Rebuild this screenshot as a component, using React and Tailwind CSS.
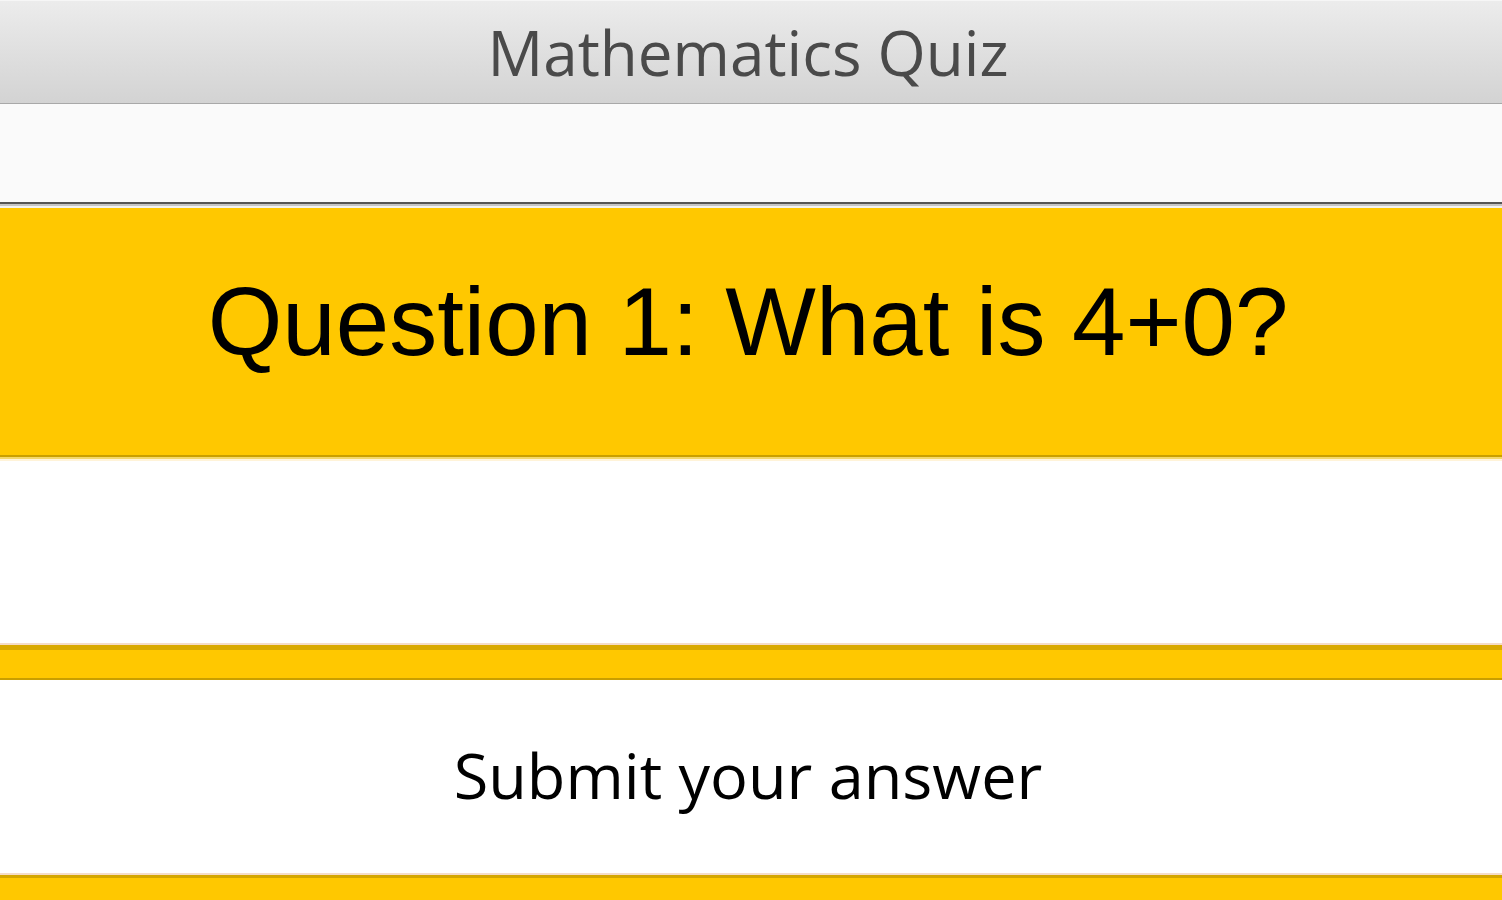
import React from 'react';

// Quiz window: title bar, empty toolbar strip, question card, answer area, submit
export default function App() {
  return (
    <div className="flex flex-col w-full h-[900px] overflow-hidden bg-white">
      {/* Title bar */}
      <div className="h-[104px] shrink-0 flex items-center justify-center pr-[6px] border-t border-[#f6f6f6] border-b border-b-[#a8a8a8] bg-gradient-to-b from-[#ececec] to-[#d3d3d3]">
        <span className="text-[62px] leading-none text-[#4a4a4a]" style={{ fontFamily: '"Open Sans", sans-serif' }}>
          Mathematics Quiz
        </span>
      </div>

      {/* Empty strip under the title bar */}
      <div className="h-[98px] shrink-0 bg-[#fafafa]"></div>

      {/* Separator */}
      <div className="shrink-0 h-[2px] bg-[#555555]"></div>
      <div className="shrink-0 h-[2px] bg-[#c4c4c4]"></div>
      <div className="shrink-0 h-[2px] bg-[#f2f2f2]"></div>

      {/* Question */}
      <div className="h-[247px] shrink-0 flex items-center justify-center pr-[6px] pb-[19px] bg-[#ffc800]">
        <span className="text-[96px] leading-none text-black" style={{ fontFamily: '"Liberation Sans", Arial, sans-serif' }}>
          Question 1: What is 4+0?
        </span>
      </div>
      <div className="shrink-0 h-[2px] bg-[#c99f00]"></div>
      <div className="shrink-0 h-[2px] bg-[#f3d76a]"></div>
      <div className="shrink-0 h-[2px] bg-[#fff3d8]"></div>

      {/* Answer area */}
      <div className="h-[182px] shrink-0 bg-white"></div>

      {/* Yellow divider bar */}
      <div className="shrink-0 h-[2px] bg-[#f5dcc8]"></div>
      <div className="shrink-0 h-[5px] bg-[#d9a900]"></div>
      <div className="h-[30px] shrink-0 bg-[#ffc800] border-b-2 border-[#c99f00]"></div>

      {/* Submit */}
      <div className="h-[193px] shrink-0 flex items-center justify-center pr-[6px] pb-[4px] bg-white">
        <span className="text-[63px] leading-none text-black" style={{ fontFamily: '"Open Sans", sans-serif' }}>
          Submit your answer
        </span>
      </div>

      {/* Bottom bar */}
      <div className="shrink-0 h-[2px] bg-[#f5dcc8]"></div>
      <div className="shrink-0 h-[3px] bg-[#d4a600]"></div>
      <div className="flex-1 bg-[#ffc800]"></div>
    </div>
  );
}
